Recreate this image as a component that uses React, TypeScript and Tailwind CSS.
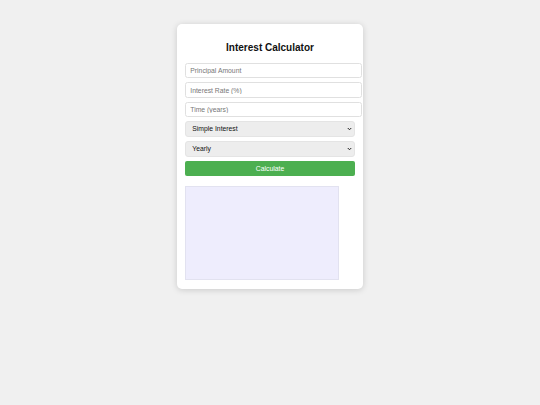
import React from "react"

function Chevron() {
  return (
    <svg
      className="pointer-events-none absolute right-[3px] top-1/2 -translate-y-1/2"
      width="5"
      height="4"
      viewBox="0 0 10 8"
      fill="none"
    >
      <path d="M1.5 2l3.5 3.5L8.5 2" stroke="#222" strokeWidth="2" />
    </svg>
  )
}

export default function App() {
  return (
    <div className="min-h-[405px] bg-[#f0f0f0] flex justify-center pt-[24px] font-['Liberation_Sans',Arial,sans-serif]">
      <div className="w-[186px] h-fit bg-white rounded-[5px] shadow-[0_1px_6px_rgba(0,0,0,0.16)] p-[8.3px]">
        <h2 className="text-[10px] leading-[11.5px] font-bold text-center text-[#111] mt-[9.5px] mb-[9.7px]">
          Interest Calculator
        </h2>

        <input
          type="number"
          placeholder="Principal Amount"
          className="block w-[177px] h-[15.5px] mb-[4px] px-[4px] border border-[#e0e0e0] rounded-[2.5px] text-[6.8px] text-[#111] placeholder:text-[#777] outline-none"
        />
        <input
          type="number"
          placeholder="Interest Rate (%)"
          className="block w-[177px] h-[15.5px] mb-[4px] px-[4px] border border-[#e0e0e0] rounded-[2.5px] text-[6.8px] text-[#111] placeholder:text-[#777] outline-none"
        />
        <input
          type="number"
          placeholder="Time (years)"
          className="block w-[177px] h-[15.5px] mb-[4px] px-[4px] border border-[#e0e0e0] rounded-[2.5px] text-[6.8px] text-[#111] placeholder:text-[#777] outline-none"
        />

        <div className="relative mb-[4px]">
          <select className="block w-full h-[16px] appearance-none bg-[#ededed] border border-[#e4e4e4] rounded-[3px] pl-[6px] text-[6.8px] text-[#111] font-medium outline-none">
            <option>Simple Interest</option>
            <option>Compound Interest</option>
          </select>
          <Chevron />
        </div>
        <div className="relative mb-[4px]">
          <select className="block w-full h-[16px] appearance-none bg-[#ededed] border border-[#e4e4e4] rounded-[3px] pl-[6px] text-[6.8px] text-[#111] font-medium outline-none">
            <option>Yearly</option>
            <option>Monthly</option>
          </select>
          <Chevron />
        </div>

        <button className="block w-full h-[15px] bg-[#4caf50] text-white text-[6.8px] rounded-[2px]">
          Calculate
        </button>

        <div className="mt-[10px] w-[154px] h-[94px] bg-[#eeedfd] border border-[#e2e2f0]" />
      </div>
    </div>
  )
}
